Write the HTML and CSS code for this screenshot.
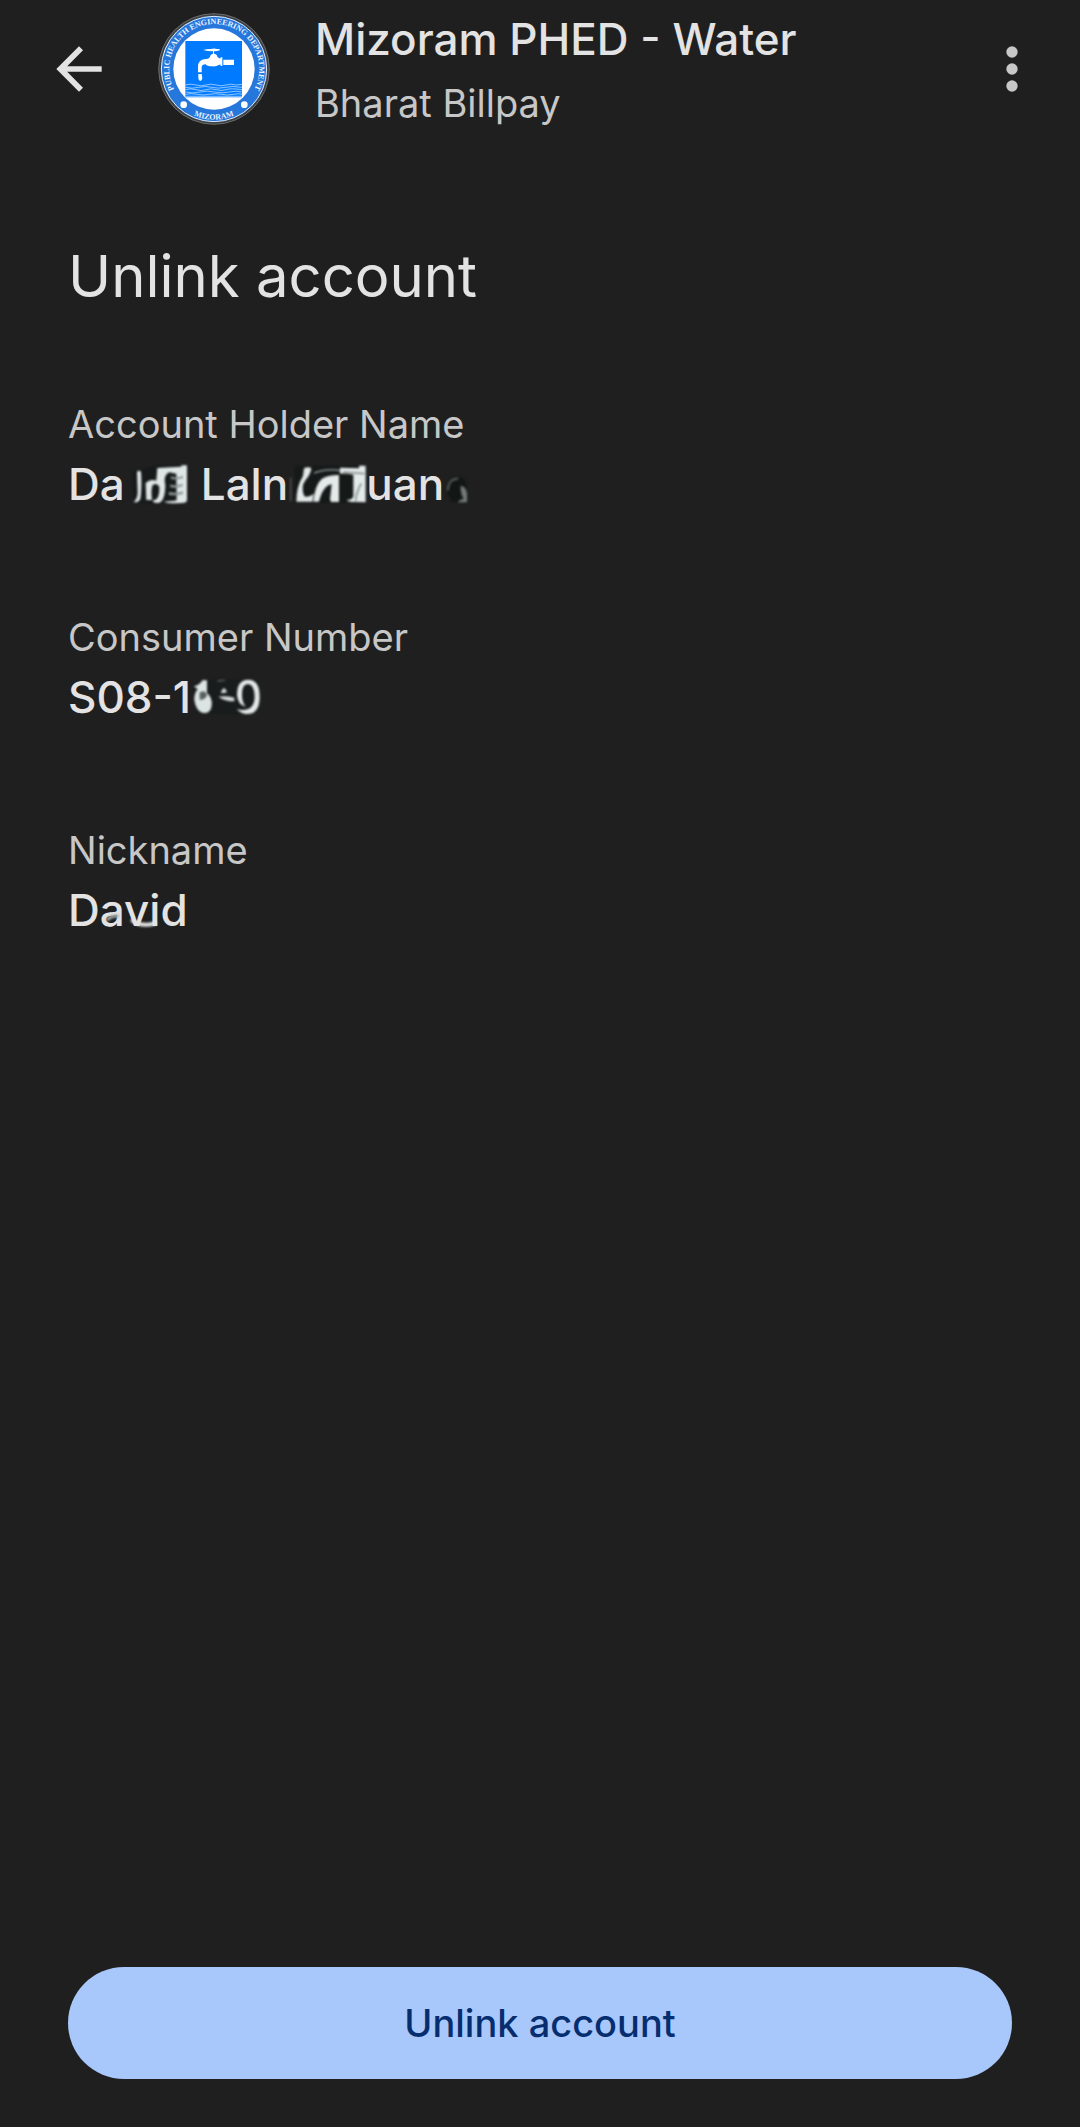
FILE: index.html
```html
<!DOCTYPE html>
<html lang="en">
<head>
<meta charset="utf-8">
<meta name="viewport" content="width=device-width, initial-scale=1">
<title>Unlink account</title>
<link rel="stylesheet" href="styles.css">
</head>
<body>
<div class="screen">
  <header class="bar">
    <button class="icon-button" type="button" aria-label="Back">
      <svg class="icon" viewBox="0 0 24 24" aria-hidden="true"><path d="M20 11H7.83l5.59-5.59L12 4l-8 8 8 8 1.41-1.41L7.83 13H20z"/></svg>
    </button>
    <svg class="logo" viewBox="39 23 336 336" role="img" aria-label="Public Health Engineering Department Mizoram">
      <defs>
        <path id="ring-top" d="M207 326a135 135 0 1 1 1 0"/>
        <path id="ring-bottom" d="M55 191a152 152 0 0 0 304 0"/>
      </defs>
      <circle cx="207" cy="191" r="166" fill="#3c4147" stroke="#8b8986" stroke-width="2"/>
      <circle cx="207" cy="191" r="158" fill="#2577dc" stroke="#e4effc" stroke-width="3"/>
      <circle cx="207" cy="191" r="122" fill="#fff"/>
      <path fill="#007bff" d="M121 107h170v169H121z"/>
      <g fill="#fff">
        <path d="M175 134q12-4 23-3 9-3 18 0 10-1 9 4-8 3-18 3v7q9 1 10 9l5 5h5v-3h5v26h-5v-4h-5q-7 6-21 5-14 0-19-6-12 0-12 10v14h-11v-17q0-21 22-23l8-1 6-5q0-8 9-10v-7q-17 0-29-4z"/>
        <path d="M235 163h32v16h-32zM160 206h10l2 12q-1 8-6 9-6-1-6-9z"/>
        <circle cx="116" cy="298" r="10"/><circle cx="298" cy="298" r="10"/>
      </g>
      <path fill="none" stroke="#d5e8ff" stroke-width="2" d="M121 239q16-5 32 0t30 0 30 0 30 0 30 0l18-2M121 246q20 5 40 0t40 0 40 0 50 0M121 253q16-5 32 0t30 0 30 0 30 0 48 0M121 260q22 5 44 0t44 0 44 0 38 0M121 267q18-4 36 0t36 0 36 0 36 0 26 0M121 273h170"/>
      <text class="logo-text"><textPath href="#ring-top" startOffset="50%">PUBLIC HEALTH ENGINEERING DEPARTMENT</textPath></text>
      <text class="logo-text"><textPath href="#ring-bottom" startOffset="50%">MIZORAM</textPath></text>
    </svg>
    <div class="biller">
      <div class="biller-name">Mizoram PHED - Water</div>
      <div class="biller-source">Bharat Billpay</div>
    </div>
    <button class="icon-button" type="button" aria-label="More options">
      <svg class="icon icon-muted" viewBox="0 0 24 24" aria-hidden="true"><circle cx="12" cy="6" r="2"/><circle cx="12" cy="12" r="2"/><circle cx="12" cy="18" r="2"/></svg>
    </button>
  </header>

  <main class="content">
    <h1 class="title">Unlink account</h1>
    <dl class="details">
      <div class="detail">
        <dt>Account Holder Name</dt>
        <dd class="masked">
          <span>Da</span>
          <svg class="smudge smudge-first" viewBox="240 64 174 126" aria-hidden="true">
            <path fill="#171a1a" d="M242 90l80-20 88 2v110l-90 6-72-4z"/>
            <g fill="#dfe7e6"><path d="M258 90q6-6 12 0 3 50-2 83-8 12-20 8 12-10 12-30z"/><path d="M284 124q14-14 32-7l3-38 72-4v-4h17v105q-1 8-14 8-42 2-56-4 28-1 39-4l-1-80-22-4q-18 9-11 38-1 54-24 54-15 0-13-8 20 0 19-40-6-14-20-6-6 15-2 45h-17z"/></g>
            <g fill="#8d9898"><path d="M359 104q18 6 37-2v8q-20 5-36 2zM357 129q20 4 38-3v8q-20 7-37 3zM353 151q26 5 43-2v8q-20 6-42 3z"/></g>
          </svg>
          <span>Laln</span>
          <svg class="smudge smudge-middle" viewBox="2 64 234 126" aria-hidden="true">
            <path fill="#151918" d="M22 72h214v112H22z"/>
            <path fill="#555" d="M8 108h4v71H8z"/>
            <g fill="#e3eae9"><path d="M50 80q12-6 22-1-1 17-17 36-16 20-4 49 14 4 28-8l-4 24H27q0-45 20-77z"/><path d="M78 180q5-50 25-68 17-12 52-12v81h-24l-3-8 5-45q-26 4-38 52z"/><path d="M158 78l57 2v-8h20v110l-33-1q-20 0-24-6 18 0 20-12V99q-20-4-40-3z"/></g>
            <g fill="none" stroke="#858f8e" stroke-width="5"><path d="M80 94q45-15 78-7M222 125q-15 25-17 53M168 91l63 5"/></g>
          </svg>
          <span>uan</span>
          <svg class="smudge smudge-last" viewBox="474 64 78 126" aria-hidden="true">
            <path fill="#121615" d="M480 144q4-42 38-38 25 2 25 40v35h-45z"/>
            <path fill="none" stroke="#555b5a" stroke-width="6" d="M485 147q3-38 32-36"/>
            <path fill="#747978" d="M524 132q16 3 19 22v28h-27q2-7 17-10-10-16-9-40z"/>
          </svg>
        </dd>
      </div>
      <div class="detail">
        <dt>Consumer Number</dt>
        <dd class="masked">
          <span>S08-1</span>
          <svg class="smudge smudge-number" viewBox="444 231 216 126" aria-hidden="true">
            <path fill="#191c1c" d="M446 256l70-16 132 5v90l-70 12-120-5z"/>
            <path fill="#dce4e3" d="M452 262q20-4 26-18h14v38q17 13 14 38-3 24-25 22-22-4-27-38-2-18 10-34z"/>
            <path fill="#596160" d="M470 280q20-8 22 10-8 14-22 12zM524 244q15-4 28 2-16-1-28 3z"/>
            <path fill="#d0d8d7" d="M533 282q10-28 19-2l-8 2zM526 293q22-4 48 3v11q-29 0-48-14z"/>
            <path fill="#e3e9e8" d="M616 242q34 0 34 52 0 51-38 51-17 0-31-14 53 10 54-38 0-36-20-38-22 0-17 46 4 17 11 23-25-7-27-36 0-46 34-46z"/>
          </svg>
        </dd>
      </div>
      <div class="detail">
        <dt>Nickname</dt>
        <dd class="nickname">David
          <svg class="smear" viewBox="180 240 180 90" aria-hidden="true">
            <path fill="none" stroke="#e3e3e3" stroke-width="12" stroke-linecap="round" d="M278 302q28 20 66 8"/>
            <path fill="none" stroke="#a6abaa" stroke-width="9" stroke-linecap="round" d="M203 298q12-12 30-10"/>
          </svg>
        </dd>
      </div>
    </dl>
  </main>

  <footer class="actions">
    <button class="primary" type="button">Unlink account</button>
  </footer>
</div>
</body>
</html>
```
FILE: styles.css
```css
* { box-sizing: border-box; }

body {
  margin: 0;
  background: #1f1f1f;
  color: #e3e3e3;
  font-family: Inter, "Liberation Sans", sans-serif;
}

button { border: 0; font: inherit; cursor: pointer; }

.screen {
  display: flex;
  flex-direction: column;
  min-height: 100vh;
}

.bar {
  display: flex;
  align-items: center;
  height: 138px;
  padding: 0 34px 0 45px;
}

.icon-button {
  display: flex;
  padding: 0;
  background: none;
}

.icon { width: 68px; height: 68px; fill: #e3e3e3; }
.icon-muted { fill: #c7c7c7; }

.logo {
  flex: none;
  width: 112px;
  height: 112px;
  margin: 0 45px;
}

.logo-text {
  fill: #eaf3ff;
  font-family: "Liberation Serif", serif;
  font-size: 24px;
  font-weight: 700;
  text-anchor: middle;
}

.biller { flex: 1; padding-top: 4px; line-height: 64px; }
.biller-name { font-size: 44px; font-weight: 500; }
.biller-source { color: #c7c7c7; font-size: 38px; }

.content { flex: 1; padding: 98px 68px 0; }

.title {
  margin: 0;
  font-size: 58px;
  font-weight: 400;
  line-height: 80px;
}

.details { margin: 78px 0 0; }
.detail { margin-bottom: 93px; }

.detail dt {
  color: #c7c7c7;
  font-size: 38px;
  line-height: 60px;
}

.detail dd {
  margin: 0;
  font-size: 44px;
  font-weight: 500;
  line-height: 60px;
}

.masked { display: flex; align-items: center; }

.smudge { flex: none; height: 42px; filter: blur(1px); }
.smudge-first { width: 58px; margin: 0 12px 0 6px; }
.smudge-middle { width: 78px; }
.smudge-last { width: 26px; }
.smudge-number { width: 72px; }

.nickname { position: relative; }

.smear {
  position: absolute;
  left: 32px;
  top: 20px;
  width: 60px;
  height: 30px;
  filter: blur(1px);
}

.actions { padding: 0 68px 48px; }

.primary {
  display: block;
  width: 100%;
  padding: 26px 48px;
  border-radius: 56px;
  background: #a8c7fa;
  color: #062e6f;
  font-size: 38px;
  font-weight: 500;
  line-height: 60px;
}
```
